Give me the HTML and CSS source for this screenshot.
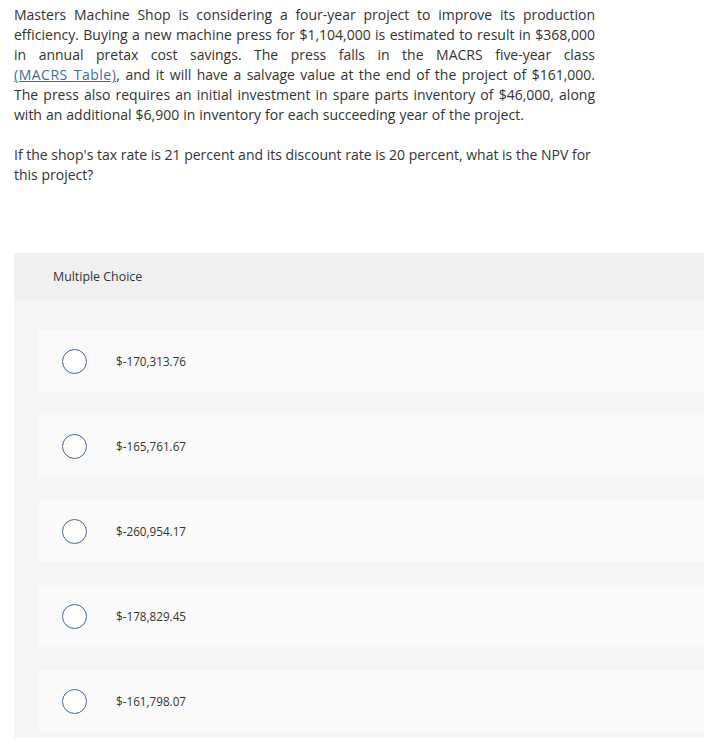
FILE: index.html
```html
<!DOCTYPE html>
<html>
<head>
<meta charset="utf-8">
<link rel="stylesheet" href="styles.css">
</head>
<body>
<div class="page">
  <div class="question">
    <p class="para justify">Masters Machine Shop is considering a four-year project to improve its production efficiency. Buying a new machine press for $1,104,000 is estimated to result in $368,000 in annual pretax cost savings. The press falls in the MACRS five-year class <a class="link" href="#">(MACRS Table)</a>, and it will have a salvage value at the end of the project of $161,000. The press also requires an initial investment in spare parts inventory of $46,000, along with an additional $6,900 in inventory for each succeeding year of the project.</p>
    <p class="para">If the shop's tax rate is 21 percent and its discount rate is 20 percent, what is the NPV for this project?</p>
  </div>
  <div class="mc">
    <div class="mc-head">Multiple Choice</div>
    <div class="mc-list">
      <div class="opt"><span class="radio"></span><span class="opt-text">$-170,313.76</span></div>
      <div class="opt"><span class="radio"></span><span class="opt-text">$-165,761.67</span></div>
      <div class="opt"><span class="radio"></span><span class="opt-text">$-260,954.17</span></div>
      <div class="opt"><span class="radio"></span><span class="opt-text">$-178,829.45</span></div>
      <div class="opt"><span class="radio"></span><span class="opt-text">$-161,798.07</span></div>
    </div>
  </div>
</div>
</body>
</html>
```
FILE: styles.css
```css
html, body {
  margin: 0;
  padding: 0;
  background: #ffffff;
}
body {
  font-family: "Open Sans", "Liberation Sans", sans-serif;
  color: #333333;
}
.page {
  padding: 5px 0 0 14px;
}
.question {
  width: 581px;
}
.para {
  margin: 0 0 20px 0;
  font-size: 14px;
  line-height: 20px;
}
.justify {
  text-align: justify;
  word-spacing: 0.35px;
}
.link {
  color: #3b6c9c;
  text-decoration: underline;
  letter-spacing: 0.5px;
  white-space: nowrap;
}
.mc {
  margin-top: 68px;
}
.mc-head {
  background: #f0f0f0;
  height: 47px;
  padding-left: 39px;
  display: flex;
  align-items: center;
  font-size: 12.4px;
  border-radius: 3px 0 0 0;
}
.mc-list {
  background: #f5f5f5;
  padding: 30px 0 7px 24px;
  display: flex;
  flex-direction: column;
  gap: 23px;
}
.opt {
  background: #fafafa;
  height: 62px;
  border-radius: 3px 0 0 3px;
  display: flex;
  align-items: center;
  padding-left: 24px;
}
.radio {
  width: 23px;
  height: 23px;
  border: 1.5px solid #3d6a99;
  border-radius: 50%;
  background: #ffffff;
  flex: none;
}
.opt-text {
  margin-left: 29px;
  font-size: 11.7px;
}
```
